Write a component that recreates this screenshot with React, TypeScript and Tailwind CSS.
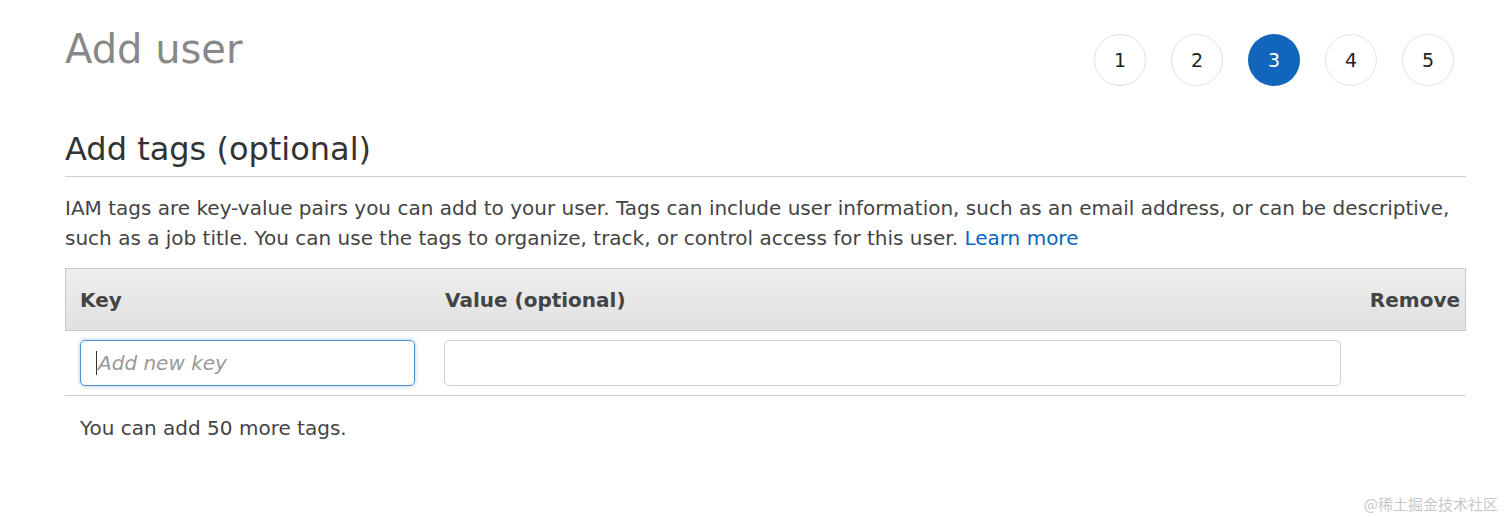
import React from 'react';

const steps = [1, 2, 3, 4, 5];

export default function App() {
  return (
    <div className="relative w-full h-[517px] bg-white overflow-hidden text-[#333] font-['DejaVu_Sans',sans-serif]">
      <div className="pl-[65px] pr-[46px]">
        {/* Page header */}
        <div className="flex items-start justify-between">
          <h1 className="mt-[27px] text-[40px] leading-[44px] text-[#888]">Add user</h1>
          <div className="mt-[34px] mr-[12px] flex gap-[25px]">
            {steps.map(step => (
              <div
                key={step}
                className={`w-[52px] h-[52px] rounded-full flex items-center justify-center text-[19px] ${
                  step === 3 ? 'bg-[#1166bb] text-white' : 'border border-[#e2e2e2] text-[#222]'
                }`}
              >
                {step}
              </div>
            ))}
          </div>
        </div>

        {/* Section */}
        <h2 className="mt-[43px] pb-[7px] text-[32px] leading-[40px] text-[#333] border-b border-[#ccc]">
          Add tags (optional)
        </h2>
        <p className="mt-[16px] text-[20px] leading-[30px] text-[#444]">
          IAM tags are key-value pairs you can add to your user. Tags can include user information, such as an email address, or can be descriptive,
          such as a job title. You can use the tags to organize, track, or control access for this user.{' '}
          <a className="text-[#0b66bb]">Learn more</a>
        </p>

        {/* Tags table */}
        <div className="mt-[15px]">
          <div className="flex items-center h-[63px] border border-[#c8c8c8] bg-gradient-to-b from-[#eeeeee] to-[#e1e1e1] text-[20px] font-bold text-[#444]">
            <div className="w-[379px] pl-[14px]">Key</div>
            <div className="flex-1">Value (optional)</div>
            <div className="pr-[5px]">Remove</div>
          </div>
          <div className="flex items-center h-[65px] border-b border-[#ccc]">
            <div className="ml-[15px] w-[335px] h-[46px] rounded-[5px] border border-[#4d90d6] shadow-[0_0_4px_rgba(77,144,214,0.5)] flex items-center pl-[15px] text-[20px] italic text-[#999]">
              <span className="w-px h-[24px] bg-[#333] mr-px" />
              Add new key
            </div>
            <div className="ml-[29px] w-[897px] h-[46px] rounded-[5px] border border-[#cfcfcf]" />
          </div>
          <p className="mt-[18px] pl-[15px] text-[20px] leading-[28px] text-[#444]">You can add 50 more tags.</p>
        </div>
      </div>

      <div className="absolute right-[14px] bottom-[2px] text-[15px] text-[#c8c8c8] font-['Noto_Sans_CJK_SC',sans-serif]">
        @稀土掘金技术社区
      </div>
    </div>
  );
}
